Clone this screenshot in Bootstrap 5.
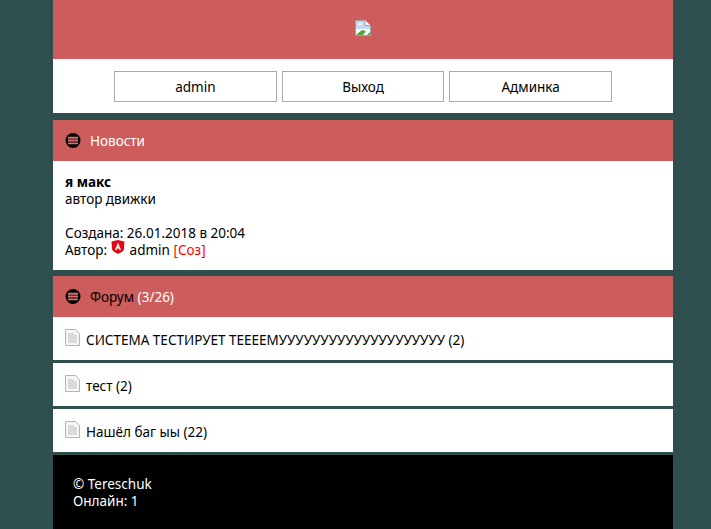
<!DOCTYPE html>
<html lang="ru">
<head>
<meta charset="utf-8">
<title>Форум</title>
<link href="https://cdn.jsdelivr.net/npm/bootstrap@5.3.0/dist/css/bootstrap.min.css" rel="stylesheet">
<style>
html,body{height:100%}
body{background:#2f4f4f;font-family:"Noto Sans","DejaVu Sans",sans-serif;font-size:13.5px;line-height:17px;color:#000}
.shell{width:620px;margin:0 38px 0 53px;min-height:529px;display:flex;flex-direction:column}
.logo-bar{background:#cd5c5c;height:59px;padding-top:20px;text-align:center}
.logo-bar svg{display:block;margin:0 auto}
.user-nav{background:#fff;height:54px;padding-top:12px;gap:5px;margin-bottom:7px}
.user-btn{width:162.6px;height:31px;border:1px solid #aaa;color:#000;text-decoration:none;line-height:31px;text-align:center;display:block}
.sect-head{background:#cd5c5c;height:41px;padding-left:12px;gap:9px;color:#000}
.sect-ttl{padding-top:2px}
.white-t{color:#fff}
.news-body{background:#fff;height:109px;padding:13px 12px 0;margin-bottom:6px}
.rowitem{background:#fff;height:43px;padding:15px 12px 0;margin-bottom:3px;gap:6px}
.rowitem svg{flex:none;margin-top:-3px}
.foot-bar{background:#000;color:#fff;flex:1 1 auto;padding:21px 20px}
.red-link{color:#f00;text-decoration:none}
.plain-link{color:#000;text-decoration:none}
.shield{vertical-align:7px;margin:-6px 1.5px -6px 0}
</style>
</head>
<body>
<div class="shell">
  <div class="logo-bar">
    <svg width="16" height="16" viewBox="0 0 16 16"><path d="M.5.5h10l5 5v10H.5z" fill="#fff" stroke="#a0a0a0"/><path d="M1 1h9v5h5v3H1z" fill="#c6d8f2"/><path d="M3 5a2 2 0 0 1 4 0z" fill="#fff"/><path d="M1 15l6-5 4 1-3 4z" fill="#4aa82e"/><path d="M12 15l3-3v3z" fill="#4aa82e"/><path d="M10 .5v5h5.500" fill="#fff" stroke="#a0a0a0"/></svg>
  </div>
  <nav class="user-nav d-flex justify-content-center">
    <a class="user-btn" href="#">admin</a>
    <a class="user-btn" href="#">Выход</a>
    <a class="user-btn" href="#">Админка</a>
  </nav>

  <div class="sect-head d-flex align-items-center">
    <svg width="16" height="16" viewBox="0 0 16 16"><circle cx="8" cy="7.500" r="7.500" fill="#000"/><path d="M3 3.800h10v1.900H3zM3 6.600h10v1.900H3zM3 9.400h10v1.900H3z" fill="#d9706e"/></svg>
    <span class="white-t sect-ttl">Новости</span>
  </div>
  <div class="news-body">
    <strong>я макс</strong><br>
    автор движки<br><br>
    Создана: 26.01.2018 в 20:04<br>
    Автор: <svg class="shield" width="14" height="14" viewBox="0 0 14 14"><path d="M7 0l6.500 1.500L13 9c-.3 2-4 4-6 5-2-1-5.700-3-6-5L.5 1.500z" fill="#dd0a1a"/><path d="M7 2.500L4 10h1.500l.6-1.600h1.800l.6 1.600H10zM6.500 7.300L7 5.700l.5 1.600z" fill="#fff"/></svg> <a class="plain-link" href="#">admin</a> <a class="red-link" href="#">[Соз]</a>
  </div>

  <div class="sect-head d-flex align-items-center">
    <svg width="16" height="16" viewBox="0 0 16 16"><circle cx="8" cy="7.500" r="7.500" fill="#000"/><path d="M3 3.800h10v1.900H3zM3 6.600h10v1.900H3zM3 9.400h10v1.900H3z" fill="#d9706e"/></svg>
    <span class="sect-ttl"><a class="plain-link" href="#">Форум</a> <span class="white-t">(3/26)</span></span>
  </div>
  <div class="rowitem d-flex">
    <svg width="15" height="17" viewBox="0 0 15 17"><path d="M.5.500h10l4 4v12H.5z" fill="#f6f6f6" stroke="#b4b4b4"/><path d="M3 5h6M3 7h9M3 9h9M3 11h9M3 13h9" stroke="#bdbdbd"/></svg>
    <a class="plain-link" href="#">СИСТЕМА ТЕСТИРУЕТ ТЕЕЕЕМУУУУУУУУУУУУУУУУУУУУ (2)</a>
  </div>
  <div class="rowitem d-flex">
    <svg width="15" height="17" viewBox="0 0 15 17"><path d="M.5.500h10l4 4v12H.5z" fill="#f6f6f6" stroke="#b4b4b4"/><path d="M3 5h6M3 7h9M3 9h9M3 11h9M3 13h9" stroke="#bdbdbd"/></svg>
    <a class="plain-link" href="#">тест (2)</a>
  </div>
  <div class="rowitem d-flex">
    <svg width="15" height="17" viewBox="0 0 15 17"><path d="M.5.500h10l4 4v12H.5z" fill="#f6f6f6" stroke="#b4b4b4"/><path d="M3 5h6M3 7h9M3 9h9M3 11h9M3 13h9" stroke="#bdbdbd"/></svg>
    <a class="plain-link" href="#">Нашёл баг ыы (22)</a>
  </div>
  <div class="foot-bar">
    © Tereschuk<br>
    Онлайн: 1
  </div>
</div>
<script src="https://cdn.jsdelivr.net/npm/bootstrap@5.3.0/dist/js/bootstrap.bundle.min.js"></script>
</body>
</html>
